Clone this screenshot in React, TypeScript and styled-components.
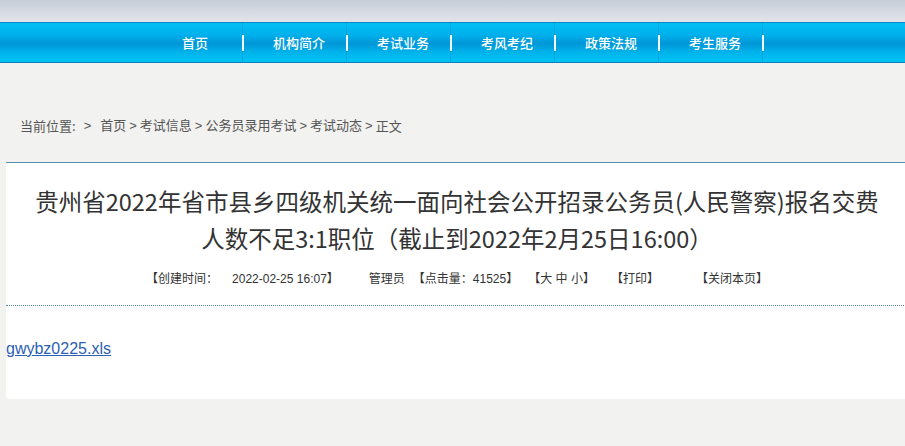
import styled, { createGlobalStyle } from "styled-components";

const navItems = ["首页", "机构简介", "考试业务", "考风考纪", "政策法规", "考生服务"];
const crumbs = ["首页", "考试信息", "公务员录用考试", "考试动态", "正文"];

const GlobalStyle = createGlobalStyle`
  html, body {
    margin: 0;
    padding: 0;
    background: #f2f2f0;
    overflow: hidden;
    font-family: "Liberation Sans", "Noto Sans CJK SC", sans-serif;
  }
`;

const App = () => {
  return (
    <Page>
      <GlobalStyle />
      <Banner />
      <NavBar>
        <NavList>
          {navItems.map((item) => (
            <NavItem key={item}>{item}</NavItem>
          ))}
        </NavList>
      </NavBar>

      <Breadcrumb>
        <span>当前位置:</span>
        <Arrow $first>&gt;</Arrow>
        {crumbs.map((c, i) => (
          <span key={c}>
            {c}
            {i < crumbs.length - 1 && <Arrow>&gt;</Arrow>}
          </span>
        ))}
      </Breadcrumb>

      <Card>
        <Title>
          贵州省2022年省市县乡四级机关统一面向社会公开招录公务员(人民警察)报名交费
          <br />
          人数不足3:1职位（截止到2022年2月25日16:00）
        </Title>
        <Meta>
          <MetaItem>【创建时间：</MetaItem>
          <MetaItem $gap={14}>2022-02-25 16:07】</MetaItem>
          <MetaItem $gap={30}>管理员</MetaItem>
          <MetaItem $gap={8}>【点击量：41525】</MetaItem>
          <MetaItem $gap={10}>【大 中 小】</MetaItem>
          <MetaItem $gap={16}>【打印】</MetaItem>
          <MetaItem $gap={37}>【关闭本页】</MetaItem>
        </Meta>
        <Body>
          <FileLink href="#">gwybz0225.xls</FileLink>
        </Body>
      </Card>
    </Page>
  );
};

const Page = styled.div`
  width: 905px;
  min-height: 446px;
`;

const Banner = styled.div`
  height: 22px;
  background: linear-gradient(180deg, #c6cdd8 0%, #d6dbe3 55%, #e1e5eb 100%);
`;

const NavBar = styled.div`
  height: 39px;
  border-top: 1px solid #1186c0;
  border-bottom: 1px solid #0d7fb7;
  background: linear-gradient(
    180deg,
    #00c0f4 0%,
    #00b0ec 30%,
    #0096d7 52%,
    #00b2eb 75%,
    #00c6f4 100%
  );
`;

const NavList = styled.ul`
  display: flex;
  margin: 0;
  padding: 0 0 0 140px;
  list-style: none;
  height: 100%;
`;

const NavItem = styled.li`
  position: relative;
  width: 104px;
  height: 100%;
  box-sizing: border-box;
  padding-left: 6px;
  display: flex;
  align-items: center;
  justify-content: center;
  color: #ffffff;
  font-family: "Noto Sans CJK SC", sans-serif;
  font-size: 13px;
  font-weight: 500;

  &::before {
    content: "";
    position: absolute;
    right: 1px;
    top: 0;
    bottom: 0;
    width: 1px;
    background: rgba(0, 120, 190, 0.35);
  }

  &::after {
    content: "";
    position: absolute;
    right: 0;
    top: 12px;
    width: 2px;
    height: 16px;
    background: #f4fbff;
  }
`;

const Breadcrumb = styled.div`
  height: 99px;
  box-sizing: border-box;
  padding: 0 0 27px 20px;
  display: flex;
  align-items: flex-end;
  font-family: "Noto Sans CJK SC", sans-serif;
  font-size: 13px;
  line-height: 18px;
  color: #555555;
  white-space: pre;
`;

const Arrow = styled.span<{ $first?: boolean }>`
  font-family: "Liberation Sans", sans-serif;
  margin: ${({ $first }) => ($first ? "0 9px 0 8px" : "0 3px")};
`;

const Card = styled.div`
  margin-left: 6px;
  width: 902px;
  height: 237px;
  box-sizing: border-box;
  border-top: 1px solid #5a8cab;
  background: #ffffff;
  border-bottom-left-radius: 4px;
  display: flex;
  flex-direction: column;
`;

const Title = styled.h1`
  margin: 0;
  padding-top: 20px;
  text-align: center;
  font-family: "Noto Sans CJK SC", sans-serif;
  font-size: 23.5px;
  font-weight: 400;
  line-height: 37px;
  color: #333333;
  white-space: nowrap;
`;

const Meta = styled.div`
  display: flex;
  justify-content: center;
  margin-top: 12px;
  padding-bottom: 16px;
  border-bottom: 1px dotted #5a8ea8;
  font-size: 12px;
  line-height: 20px;
  color: #333333;
  white-space: pre;
`;

const MetaItem = styled.span<{ $gap?: number }>`
  margin-left: ${({ $gap }) => $gap ?? 0}px;
`;

const Body = styled.div`
  padding-top: 34px;
`;

const FileLink = styled.a`
  font-family: "Liberation Sans", sans-serif;
  font-size: 16px;
  line-height: 18px;
  color: #2b5fb3;
  text-decoration: underline;
`;

export default App;
